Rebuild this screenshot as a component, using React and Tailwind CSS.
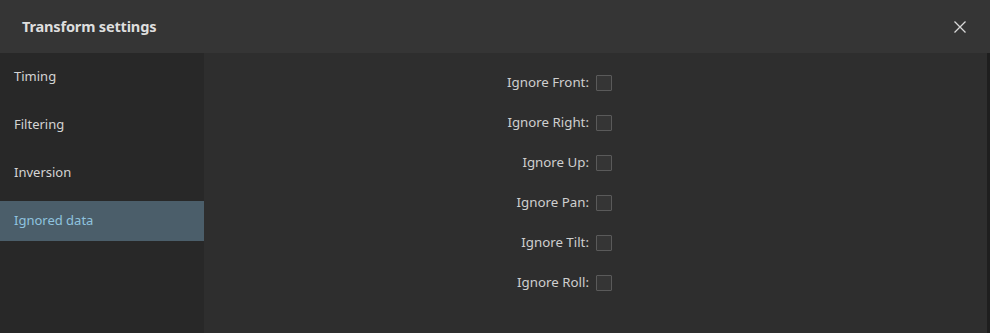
import React from "react";

const items = ["Timing", "Filtering", "Inversion", "Ignored data"];
const rows = ["Ignore Front", "Ignore Right", "Ignore Up", "Ignore Pan", "Ignore Tilt", "Ignore Roll"];

export default function App() {
  return (
    <div className="w-[990px] h-[333px] flex flex-col bg-[#2e2e2e] overflow-hidden" style={{ fontFamily: '"Noto Sans", "Open Sans", sans-serif' }}>
      <div className="h-[53px] shrink-0 bg-[#353535] flex items-center justify-between pl-[22px] pr-[24px]">
        <span className="text-[14.6px] font-bold text-[#dedede] tracking-[-0.2px]">Transform settings</span>
        <svg width="12" height="12" viewBox="0 0 12 12" className="text-[#d8d8d8]">
          <path d="M0.5 0.5 L11.5 11.5 M11.5 0.5 L0.5 11.5" stroke="currentColor" strokeWidth="1.3" />
        </svg>
      </div>
      <div className="flex flex-1 min-h-0">
        <div className="w-[204px] shrink-0 bg-[#282828] pt-1 flex flex-col gap-2">
          {items.map((it) => (
            <div
              key={it}
              className={
                it === "Ignored data"
                  ? "h-[40px] shrink-0 flex items-center pl-[14px] text-[13px] bg-[#4b5e6a] text-[#8fc3df]"
                  : "h-[40px] shrink-0 flex items-center pl-[14px] text-[13px] text-[#d4d4d4]"
              }
            >
              {it}
            </div>
          ))}
        </div>
        <div className="flex-1 pt-[10px] flex flex-col items-start pl-[299px]">
          {rows.map((r) => (
            <div key={r} className="h-[40px] flex items-center gap-[7px]">
              <span className="w-[86px] text-right text-[13.3px] text-[#cfcfcf]">{r}:</span>
              <span className="w-[16px] h-[16px] border border-[#5a5a5a] bg-[#353535] rounded-[1px]" />
            </div>
          ))}
        </div>
        <div className="w-[3px] bg-[#1e1e1e]" />
      </div>
    </div>
  );
}
